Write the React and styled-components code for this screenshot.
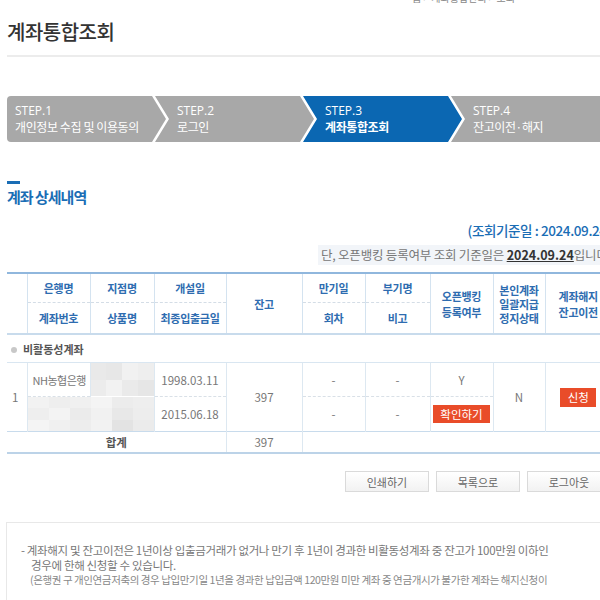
import React from "react";
import styled, { createGlobalStyle } from "styled-components";

const GlobalStyle = createGlobalStyle`
  html, body {
    margin: 0;
    padding: 0;
    background: #fff;
    overflow: hidden;
  }
  body {
    font-family: "Noto Sans CJK KR", "Noto Sans", sans-serif;
    color: #666;
  }
`;

const Page = styled.div`
  width: 604px;
  padding-left: 7px;
`;

const Breadcrumb = styled.div`
  height: 4px;
  overflow: hidden;
  display: flex;
  justify-content: flex-end;
  align-items: flex-end;
  padding-right: 96px;
  font-size: 10px;
  line-height: 12px;
  color: #888;
`;

const PageTitle = styled.h2`
  margin: 16px 0 0;
  padding-bottom: 11px;
  border-bottom: 2px solid #ececec;
  font-size: 20px;
  line-height: 24px;
  font-weight: 500;
  color: #333;
  letter-spacing: -0.5px;
`;

const Steps = styled.ol`
  display: flex;
  list-style: none;
  margin: 39px 0 0;
  padding: 0;
`;

const Step = styled.li`
  flex: 0 0 159px;
  height: 46px;
  box-sizing: border-box;
  margin-left: -11px;
  padding-left: 22px;
  background: ${(p) => (p.$active ? "#0b67b2" : "#a8a8a8")};
  clip-path: polygon(0 0, calc(100% - 14px) 0, 100% 50%, calc(100% - 14px) 100%, 0 100%, 14px 50%);
  display: flex;
  flex-direction: column;
  justify-content: center;
  color: #fff;
  font-size: 12px;
  line-height: 16px;
  letter-spacing: -0.4px;

  &:first-child {
    margin-left: 0;
    padding-left: 8px;
    border-radius: 4px 0 0 4px;
    clip-path: polygon(0 0, calc(100% - 14px) 0, 100% 50%, calc(100% - 14px) 100%, 0 100%);
  }

  &:last-child {
    flex: 1 0 auto;
    clip-path: polygon(0 0, 100% 0, 100% 100%, 0 100%, 14px 50%);
  }
`;

const StepNo = styled.span`
  font-family: "Open Sans", "Noto Sans", sans-serif;
  letter-spacing: 0;
`;

const StepLabel = styled.span`
  font-weight: ${(p) => (p.$active ? 700 : 400)};
`;

const SectionTitle = styled.h3`
  margin: 39px 0 0;
  font-size: 15px;
  line-height: 20px;
  font-weight: 700;
  color: #1a6db5;
  letter-spacing: -1px;

  &::before {
    content: "";
    display: block;
    width: 13px;
    height: 3px;
    background: #1a6db5;
    margin-bottom: 3px;
  }
`;

const DateLine = styled.div`
  margin-top: 14px;
  text-align: right;
  font-size: 13.5px;
  line-height: 18px;
  font-weight: 500;
  color: #1a6db5;
  letter-spacing: -0.4px;
  white-space: nowrap;
`;

const SubNoteRow = styled.div`
  margin-top: 6px;
  display: flex;
  justify-content: flex-end;
`;

const SubNote = styled.span`
  background: #f2f5f9;
  padding-left: 3px;
  font-size: 12.5px;
  line-height: 20px;
  color: #777;
  letter-spacing: -0.2px;
  white-space: nowrap;

  b {
    color: #333;
    text-decoration: underline;
    font-weight: 700;
    letter-spacing: 0;
  }
`;

const Table = styled.table`
  width: 604px;
  margin-top: 7px;
  border-collapse: collapse;
  table-layout: fixed;
  border-top: 2px solid #90b7dd;
`;

const Th = styled.th`
  height: ${(p) => p.$h || 28}px;
  padding: 0;
  border-left: ${(p) => (p.$noLeft ? "none" : "1px solid #d4e3f0")};
  border-bottom: ${(p) => (p.$dotted ? "1px dashed #d4dde6" : "2px solid #c8dbec")};
  color: #2e6cb0;
  font-size: 11px;
  line-height: ${(p) => (p.$tight ? 14 : 16)}px;
  font-weight: 700;
  text-align: center;
  vertical-align: middle;
  letter-spacing: -0.3px;
`;

const CategoryCell = styled.td`
  height: 27px;
  padding: 0 0 0 4px;
  font-size: 11px;
  font-weight: 700;
  color: #555;
  border-bottom: 1px solid #d9e6f1;

  &::before {
    content: "";
    display: inline-block;
    width: 6px;
    height: 6px;
    border-radius: 50%;
    background: #c8c8c8;
    margin-right: 6px;
    vertical-align: 1px;
  }
`;

const Td = styled.td`
  height: ${(p) => p.$h || 33}px;
  padding: 0;
  border-left: ${(p) => (p.$noLeft ? "none" : "1px solid #dde8f1")};
  border-bottom: ${(p) => (p.$dotted ? "1px dashed #d9e0e7" : "none")};
  text-align: ${(p) => p.$align || "center"};
  padding-left: ${(p) => (p.$align === "left" ? "5px" : "0")};
  vertical-align: middle;
  font-size: 11.5px;
  color: #777;
  white-space: nowrap;
  overflow: hidden;
`;

const BankName = styled.span`
  font-size: 11px;
  letter-spacing: -0.5px;
`;

const TotalCell = styled.td`
  height: 20px;
  padding: 0;
  border-top: 1px solid #c8dbec;
  border-bottom: 2px solid #bcd3e8;
  border-left: ${(p) => (p.$noLeft ? "none" : "1px solid #dde8f1")};
  text-align: center;
  font-size: 11.5px;
  font-weight: ${(p) => (p.$bold ? 700 : 400)};
  color: ${(p) => (p.$bold ? "#555" : "#777")};
`;

const Mosaic = styled.div`
  display: grid;
  grid-template-columns: repeat(${(p) => p.$cols}, 1fr);
  height: ${(p) => p.$h}px;
`;

const Tile = styled.div`
  background: ${(p) => p.$shade};
`;

const RedButton = styled.button`
  border: none;
  background: #e94c29;
  color: #fff;
  font-family: inherit;
  font-size: 11.5px;
  height: ${(p) => p.$h || 18}px;
  width: ${(p) => p.$w}px;
  padding: 0;
  cursor: pointer;
`;

const ButtonRow = styled.div`
  margin-top: 17px;
  display: flex;
  justify-content: flex-end;
  gap: 7px;
`;

const GrayButton = styled.button`
  width: 84px;
  height: 21px;
  padding: 0;
  border: 1px solid #dadada;
  background: linear-gradient(#ffffff, #f2f2f2);
  font-family: inherit;
  font-size: 11px;
  color: #666;
  cursor: pointer;
`;

const NoteBox = styled.div`
  margin-top: 30px;
  margin-left: -1px;
  border: 1px solid #e8e8e8;
  padding: 20px 14px 24px;
`;

const NoteItem = styled.p`
  margin: 0;
  padding-left: 10px;
  text-indent: -10px;
  font-size: 11.5px;
  line-height: 15px;
  color: #777;
  letter-spacing: -0.35px;
  white-space: nowrap;
`;

const NoteSub = styled.p`
  margin: 0;
  padding-left: 9px;
  font-size: 10.5px;
  line-height: 14px;
  color: #888;
  letter-spacing: -0.4px;
  white-space: nowrap;
`;

const steps = [
  { no: "STEP.1", label: "개인정보 수집 및 이용동의" },
  { no: "STEP.2", label: "로그인" },
  { no: "STEP.3", label: "계좌통합조회", active: true },
  { no: "STEP.4", label: "잔고이전·해지" },
];

const mosaicTop = ["#e9e9e9", "#e7e7e7", "#f1f1f1", "#eeeeee", "#ececec", "#f2f2f2", "#eaeaea", "#e6e6e6"];
const mosaicBottom = [
  "#f2f2f2", "#eeeeee", "#f0f0f0", "#f4f4f4", "#ececec", "#eeeeee",
  "#eeeeee", "#f3f3f3", "#ebebeb", "#f1f1f1", "#e8e8e8", "#ededed",
  "#f4f4f4", "#f0f0f0", "#ededed", "#f2f2f2", "#e3e3e3", "#ebebeb",
];

export default function App() {
  return (
    <>
      <GlobalStyle />
      <Page>
        <Breadcrumb>홈 &gt; 계좌통합관리 &gt; 조회</Breadcrumb>
        <PageTitle>계좌통합조회</PageTitle>

        <Steps>
          {steps.map((s) => (
            <Step key={s.no} $active={s.active}>
              <StepNo>{s.no}</StepNo>
              <StepLabel $active={s.active}>{s.label}</StepLabel>
            </Step>
          ))}
        </Steps>

        <SectionTitle>계좌 상세내역</SectionTitle>
        <DateLine>(조회기준일 : 2024.09.24)</DateLine>
        <SubNoteRow>
          <SubNote>
            단, 오픈뱅킹 등록여부 조회 기준일은 <b>2024.09.24</b>입니다.
          </SubNote>
        </SubNoteRow>

        <Table>
          <colgroup>
            <col style={{ width: 20 }} />
            <col style={{ width: 63 }} />
            <col style={{ width: 64 }} />
            <col style={{ width: 72 }} />
            <col style={{ width: 76 }} />
            <col style={{ width: 63 }} />
            <col style={{ width: 65 }} />
            <col style={{ width: 63 }} />
            <col style={{ width: 52 }} />
            <col style={{ width: 66 }} />
          </colgroup>
          <thead>
            <tr>
              <Th rowSpan={2} $noLeft />
              <Th $dotted>은행명</Th>
              <Th $dotted>지점명</Th>
              <Th $dotted>개설일</Th>
              <Th rowSpan={2}>잔고</Th>
              <Th $dotted>만기일</Th>
              <Th $dotted>부기명</Th>
              <Th rowSpan={2}>
                오픈뱅킹
                <br />
                등록여부
              </Th>
              <Th rowSpan={2} $tight>
                본인계좌
                <br />
                일괄지급
                <br />
                정지상태
              </Th>
              <Th rowSpan={2}>
                계좌해지
                <br />
                잔고이전
              </Th>
            </tr>
            <tr>
              <Th $h={30}>계좌번호</Th>
              <Th $h={30}>상품명</Th>
              <Th $h={30}>최종입출금일</Th>
              <Th $h={30}>회차</Th>
              <Th $h={30}>비고</Th>
            </tr>
          </thead>
          <tbody>
            <tr>
              <CategoryCell colSpan={10}>비활동성계좌</CategoryCell>
            </tr>
            <tr>
              <Td rowSpan={2} $noLeft $align="left">
                1
              </Td>
              <Td $dotted $align="left">
                <BankName>NH농협은행</BankName>
              </Td>
              <Td>
                <Mosaic $cols={4} $h={33}>
                  {mosaicTop.map((c, i) => (
                    <Tile key={i} $shade={c} />
                  ))}
                </Mosaic>
              </Td>
              <Td $dotted>1998.03.11</Td>
              <Td rowSpan={2}>397</Td>
              <Td $dotted>-</Td>
              <Td $dotted>-</Td>
              <Td $dotted>Y</Td>
              <Td rowSpan={2}>N</Td>
              <Td rowSpan={2}>
                <RedButton $w={36} $h={19}>
                  신청
                </RedButton>
              </Td>
            </tr>
            <tr>
              <Td colSpan={2}>
                <Mosaic $cols={6} $h={34}>
                  {mosaicBottom.map((c, i) => (
                    <Tile key={i} $shade={c} />
                  ))}
                </Mosaic>
              </Td>
              <Td>2015.06.18</Td>
              <Td>-</Td>
              <Td>-</Td>
              <Td>
                <RedButton $w={57}>확인하기</RedButton>
              </Td>
            </tr>
            <tr>
              <TotalCell colSpan={4} $noLeft $bold>
                합계
              </TotalCell>
              <TotalCell>397</TotalCell>
              <TotalCell colSpan={5} />
            </tr>
          </tbody>
        </Table>

        <ButtonRow>
          <GrayButton>인쇄하기</GrayButton>
          <GrayButton>목록으로</GrayButton>
          <GrayButton>로그아웃</GrayButton>
        </ButtonRow>

        <NoteBox>
          <NoteItem>
            - 계좌해지 및 잔고이전은 1년이상 입출금거래가 없거나 만기 후 1년이 경과한 비활동성계좌 중 잔고가 100만원 이하인
            <br />
            경우에 한해 신청할 수 있습니다.
          </NoteItem>
          <NoteSub>
            (은행권 구 개인연금저축의 경우 납입만기일 1년을 경과한 납입금액 120만원 미만 계좌 중 연금개시가 불가한 계좌는 해지신청이
          </NoteSub>
        </NoteBox>
      </Page>
    </>
  );
}
